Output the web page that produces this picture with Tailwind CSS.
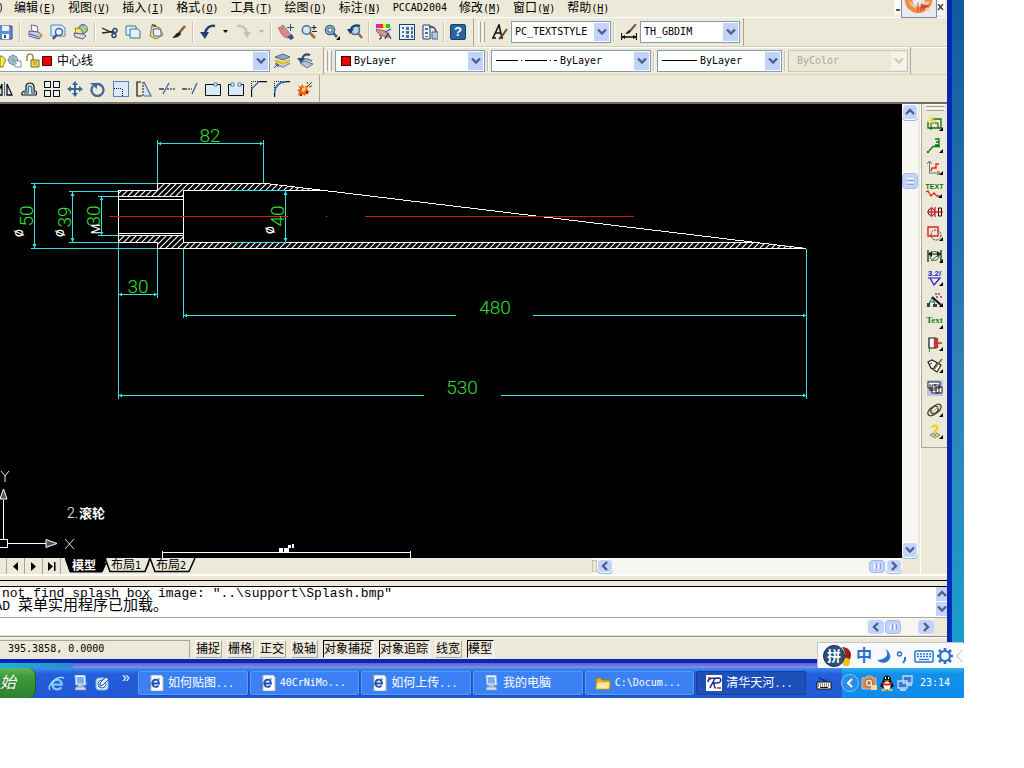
<!DOCTYPE html>
<html lang="zh-CN">
<head>
    <meta charset="UTF-8">
    <meta name="viewport" content="width=device-width, initial-scale=1.0">
    <title>PCCAD2004</title>
    <script src="https://cdn.jsdelivr.net/npm/@tailwindcss/browser@4"></script>
</head>
<body class="flex min-h-screen flex-col bg-white pr-[60px] pb-[70px] font-['DejaVu_Sans_Mono','Noto_Sans_CJK_SC',monospace] text-[10px] leading-4 text-black">
    <!-- Shared glyphs -->
    <svg class="hidden">
        <symbol id="down" viewBox="0 0 10 8"><path d="M1 1.5l4 4 4-4" fill="none" stroke="#4d6185" stroke-width="2.4"/></symbol>
        <symbol id="up" viewBox="0 0 10 8"><path d="M1 6l4-4 4 4" fill="none" stroke="#4d6185" stroke-width="2.4"/></symbol>
        <symbol id="left" viewBox="0 0 8 10"><path d="M6 1L2 5l4 4" fill="none" stroke="#4d6185" stroke-width="2.4"/></symbol>
        <symbol id="right" viewBox="0 0 8 10"><path d="M2 1l4 4-4 4" fill="none" stroke="#4d6185" stroke-width="2.4"/></symbol>
        <symbol id="ie-page" viewBox="0 0 16 16">
            <path d="M3 0h10l2 2v14H3z" fill="#fff" stroke="#b8b8a8"/>
            <path d="M11 8.500H4.500a3.200 3.200 0 1 1 6.300-1.200zM10.500 10.500a3.300 3.300 0 0 1-6-2" fill="none" stroke="#1c4fae" stroke-width="1.800"/>
            <path d="M1.500 13C-.5 10 8 3 12 4" fill="none" stroke="#2a66c8"/>
        </symbol>
        <symbol id="computer" viewBox="0 0 16 16">
            <path d="M3 0h10l1 10H4z" fill="#eef6ff" stroke="#9db8e8"/>
            <path d="M4.500 2h7l.7 6.500H5.200z" fill="#6cb0f8"/>
            <path d="M6 10h5v2H6zM4 12h9l1 3H3z" fill="#d7dbe6" stroke="#8f9bb8" stroke-width=".6"/>
        </symbol>
    </svg>

    <div class="relative flex flex-1 flex-col bg-linear-to-b from-[#0f5a9e] via-[#2f7fb4] to-[#08a4d0]">
        <!-- Application window -->
        <div class="mr-3 flex flex-1 flex-col border-r-[5px] border-b-4 border-[#0628b4] bg-[#ece9d8]">
            <!-- Menu bar -->
            <header class="flex h-[18px] items-start border-b border-white pl-[2px]">
                <nav class="flex flex-1 gap-3 text-xs leading-4 whitespace-nowrap">
                    <span class="-ml-1 w-1 overflow-hidden text-[10px]">)</span>
                    <a href="#">编辑<span class="text-[10px]">(<u>E</u>)</span></a>
                    <a href="#">视图<span class="text-[10px]">(<u>V</u>)</span></a>
                    <a href="#">插入<span class="text-[10px]">(<u>I</u>)</span></a>
                    <a href="#">格式<span class="text-[10px]">(<u>O</u>)</span></a>
                    <a href="#">工具<span class="text-[10px]">(<u>T</u>)</span></a>
                    <a href="#">绘图<span class="text-[10px]">(<u>D</u>)</span></a>
                    <a href="#">标注<span class="text-[10px]">(<u>N</u>)</span></a>
                    <a href="#" class="text-[10px]">PCCAD2004</a>
                    <a href="#">修改<span class="text-[10px]">(<u>M</u>)</span></a>
                    <a href="#">窗口<span class="text-[10px]">(<u>W</u>)</span></a>
                    <a href="#">帮助<span class="text-[10px]">(<u>H</u>)</span></a>
                </nav>
                <div class="mr-[2px] flex h-[15px] w-[51px] items-start justify-end bg-[#fbfaf5]">
                    <span class="mt-[9px] mr-px h-[2px] w-[4px] bg-[#555]"></span>
                    <svg class="h-[18px] w-[36px] border border-t-0 border-[#7a8ea8] bg-[#e9e9ee]" viewBox="0 0 36 18">
                        <path d="M3 0c0 7 5 13 14 14 9-1 15-7 15-14h-8c0 5-3 7-7 7s-6-3-6-7z" fill="#ee8a4a"/>
                        <path d="M7 0c1 5 5 9 9 9M20 3l10-2-4 6 3 4-8-2z" fill="#f8c8a0"/>
                        <path d="M20 5l8 1-6 4zM17 3v9M20 7v5" fill="#e2441e" stroke="#c8431c"/>
                    </svg>
                    <svg class="mt-1 size-[8px]" viewBox="0 0 8 8"><path d="M1 0l5 6M6 0L1 6" stroke="#444" stroke-width="1.500"/></svg>
                </div>
            </header>

            <!-- Standard + styles toolbars -->
            <div class="flex h-[29px] items-center border-b border-[#d8d2bd] shadow-[0_1px_0_#fff]">
                <div class="flex h-full items-center border-r border-[#aca899]">
                    <button class="flex w-[17px] justify-end pr-[4px]" aria-label="保存"><svg class="size-4 shrink-0" viewBox="0 0 16 16"><path d="M2 2h13v13H2z" fill="#5f8fce" stroke="#274f86"/><path d="M5 2h7v5H5z" fill="#e9f1fb"/><path d="M5 10h7v5H5z" fill="#fff"/><path d="M7 11h2v3H7z" fill="#274f86"/></svg></button>
                    <span class="mx-[2px] h-5 w-[2px] border-r border-white bg-[#c5c2b2]"></span>
                    <button class="flex w-[23px] justify-center" aria-label="打印"><svg class="size-4" viewBox="0 0 16 16"><path d="M4 1l6 1 1 6-6-1z" fill="#fff" stroke="#5b6a9a"/><path d="M2 7l9 1 4 3-3 4-10-3z" fill="#c9cfe8" stroke="#55608f"/><path d="M3 10l9 3" stroke="#4a5a98"/><path d="M12 9l2 2" stroke="#d8a030" stroke-width="2"/></svg></button>
                    <button class="flex w-[23px] justify-center" aria-label="打印预览"><svg class="size-4" viewBox="0 0 16 16"><path d="M1 1h11l3 3v8H1z" fill="#d7ebfb" stroke="#5589c4"/><circle cx="9" cy="8" r="3.500" fill="#eef8ff" stroke="#3f669c" stroke-width="1.400"/><path d="M6.500 11L3 15" stroke="#3a4f80" stroke-width="2.400"/></svg></button>
                    <button class="flex w-[23px] justify-center" aria-label="发布"><svg class="size-4" viewBox="0 0 16 16"><circle cx="10" cy="5" r="4.500" fill="#80bdd8" stroke="#3a6f90"/><path d="M2 4l6 1 2 5-7-1z" fill="#ffe860" stroke="#9a8b20"/><path d="M1 9l9 1 3 2-3 3-8-2z" fill="#d4d8ea" stroke="#55608f"/><path d="M9 3l3 4M12 2l2 3" stroke="#e8d040" stroke-width="1.500"/></svg></button>
                    <span class="mx-[2px] h-5 w-[2px] border-r border-white bg-[#c5c2b2]"></span>
                    <button class="flex w-[23px] justify-center" aria-label="剪切"><svg class="size-4" viewBox="0 0 16 16"><path d="M0 4l11 5M0 9l11-1.500" stroke="#23262e" stroke-width="1.300"/><circle cx="13" cy="6.500" r="2" fill="none" stroke="#2c4272" stroke-width="1.400"/><circle cx="12" cy="11.500" r="2" fill="none" stroke="#2c4272" stroke-width="1.400"/></svg></button>
                    <button class="flex w-[23px] justify-center" aria-label="复制"><svg class="size-4" viewBox="0 0 16 16"><path d="M1 2h10v9H1z" fill="#e2f2fc" stroke="#3d71a4"/><path d="M5 5h8l2 2v7H5z" fill="#e2f2fc" stroke="#3d71a4"/></svg></button>
                    <button class="flex w-[23px] justify-center" aria-label="粘贴"><svg class="size-4" viewBox="0 0 16 16"><path d="M4 1l8 3 3 7-7 4-6-3z" fill="#e5d68c" stroke="#938438"/><path d="M5 5h6l2 2v5H6z" fill="#e9f4fd" stroke="#44719f"/><path d="M4 1l4 1" stroke="#555" stroke-width="2"/></svg></button>
                    <button class="flex w-[23px] justify-center" aria-label="特性匹配"><svg class="size-4" viewBox="0 0 16 16"><path d="M14 2L8 9" stroke="#8b5a3b" stroke-width="2.500"/><path d="M9 8l1 2c-2 3-5 4-9 4 3-2 3-5 8-6z" fill="#2b1f1c"/></svg></button>
                    <span class="mx-[2px] h-5 w-[2px] border-r border-white bg-[#c5c2b2]"></span>
                    <button class="flex w-[23px] justify-center" aria-label="放弃"><svg class="size-4" viewBox="0 0 16 16"><path d="M15 2C10 1 6 4 5 9" fill="none" stroke="#23416f" stroke-width="2.600"/><path d="M0 8h9l-4 7z" fill="#23416f"/></svg></button>
                    <button class="flex w-[13px] justify-center" aria-label="放弃列表"><svg class="h-1 w-[7px]" viewBox="0 0 7 4"><path d="M1 0h5L3.500 3z"/></svg></button>
                    <button class="flex w-[23px] justify-center" aria-label="重做" disabled><svg class="size-4" viewBox="0 0 16 16"><path d="M1 2c5-1 9 2 10 7" fill="none" stroke="#c3c2bb" stroke-width="2.400"/><path d="M7 8h8l-4 6z" fill="#c3c2bb"/></svg></button>
                    <button class="flex w-[13px] justify-center" aria-label="重做列表" disabled><svg class="h-1 w-[7px]" viewBox="0 0 7 4"><path d="M1 0h5L3.500 3z" fill="#b5b3a8"/></svg></button>
                    <span class="mx-[2px] h-5 w-[2px] border-r border-white bg-[#c5c2b2]"></span>
                    <button class="flex w-[23px] justify-center" aria-label="实时平移"><svg class="size-4" viewBox="0 0 16 16"><path d="M0 4l2-1 3 3-2-4 2-1 5 6 3 4-4 3C4 13 3 8 0 4z" fill="#d18d8c" stroke="#9c5a5c" stroke-width=".7"/><path d="M9 13l5-3 2 4-3 2z" fill="#2b5690"/><path d="M12.500 0v7M9 3.500h7" stroke="#38527c"/></svg></button>
                    <button class="flex w-[23px] justify-center" aria-label="实时缩放"><svg class="size-4" viewBox="0 0 16 16"><circle cx="5.500" cy="6" r="4.200" fill="#cdeaf6" stroke="#536d8c" stroke-width="1.500"/><path d="M9 9l5 5" stroke="#a06a45" stroke-width="2.600"/><path d="M13 1v5M10.500 3.500h5M11 7.500h5" stroke="#222"/></svg></button>
                    <button class="flex w-[23px] justify-center" aria-label="窗口缩放"><svg class="size-4" viewBox="0 0 16 16"><circle cx="6" cy="6" r="4.500" fill="#bfe0f2" stroke="#3f5d85" stroke-width="1.500"/><path d="M4 4h4v4H4z" fill="#fff" stroke="#2d4a78"/><path d="M9 9l4 4" stroke="#4b6287" stroke-width="2.600"/><path d="M16 12v4h-4z"/></svg></button>
                    <button class="flex w-[23px] justify-center" aria-label="上一个缩放"><svg class="size-4" viewBox="0 0 16 16"><circle cx="8" cy="6" r="4.500" fill="#b5d5ea" stroke="#4a678e" stroke-width="1.500"/><path d="M11 9l4 5" stroke="#8c6a5a" stroke-width="2.600"/><path d="M13 2C8 0 5 3 4 6" fill="none" stroke="#1f3d70" stroke-width="2"/><path d="M0 5h7l-4 5z" fill="#1f3d70"/></svg></button>
                    <span class="mx-[2px] h-5 w-[2px] border-r border-white bg-[#c5c2b2]"></span>
                    <button class="flex w-[23px] justify-center" aria-label="特性"><svg class="size-4" viewBox="0 0 16 16"><path d="M0 0h4v4H0z" fill="#e020c0"/><path d="M4 0h3v4H4z" fill="#f03020"/><path d="M7 0h3v4H7z" fill="#ffe020"/><path d="M10 0h4v4h-4z" fill="#20c040"/><path d="M0 5l9 2 4 4-4 2-8-5z" fill="#d49a92" stroke="#7b504f" stroke-width=".8"/><path d="M3 11c3 0 3 4 0 4M9 15l3-6 3 6M10 13h4M15 5l-6 3" stroke="#324777" fill="none" stroke-width="1.200"/></svg></button>
                    <button class="flex w-[23px] justify-center" aria-label="设计中心"><svg class="size-4" viewBox="0 0 16 16" shape-rendering="crispEdges"><path d="M.5.5h15v15H.5z" fill="#e4f3fb" stroke="#22406c"/><path d="M3 3h2v2H3zM3 7h2v2H3zM3 11h2v2H3zM7 3h3v3H7zM12 3h2v3h-2zM7 7h3v3H7zM12 7h2v3h-2zM7 11h3v3H7zM12 11h2v3h-2z" fill="#4a7099"/></svg></button>
                    <button class="flex w-[23px] justify-center" aria-label="工具选项板"><svg class="size-4" viewBox="0 0 16 16"><path d="M1 1h7v14H1z" fill="#e4f3fb" stroke="#22406c"/><path d="M3 4h3v2H3zM3 8h3v2H3zM3 12h3v1H3z" fill="#4a7099"/><path d="M7 3c4-1 7 1 7 6" fill="none" stroke="#22406c" stroke-width="1.500"/><path d="M10 8h6v7h-6z" fill="#b5cce0" stroke="#4a6287"/></svg></button>
                    <span class="mx-[2px] h-5 w-[2px] border-r border-white bg-[#c5c2b2]"></span>
                    <button class="mx-[3px] flex size-[16px] items-center justify-center rounded-xs border border-[#163d6b] bg-[#2a649f] font-['Liberation_Sans'] text-[13px] font-bold text-white">?</button>
                    <span class="w-[4px]"></span>
                </div>
                <div class="flex h-full items-center border-r border-[#aca899] pr-[3px]">
                    <span class="ml-[4px] h-[22px] w-[3px] border border-white border-r-[#aca899]"></span>
                    <span class="mr-[3px] ml-px h-[22px] w-[3px] border border-white border-r-[#aca899]"></span>
                    <button class="flex w-[23px] justify-center" aria-label="文字样式"><svg class="size-4" viewBox="0 0 16 16"><path d="M1 14L7 1l3 13M3 9h6M0 14h4M8 14h3" fill="none" stroke="#111" stroke-width="1.600"/><path d="M15 5l-5 7-3 3" stroke="#6b4a3a" stroke-width="2"/></svg></button>
                    <label class="relative flex h-[22px] w-[100px] items-center border border-[#7f9db9] bg-white">
                        <select class="h-full w-full appearance-none pl-[3px] outline-none" aria-label="文字样式"><option>PC_TEXTSTYLE</option></select>
                        <span class="pointer-events-none absolute right-px flex h-[18px] w-[15px] items-center justify-center bg-[#c1d2fb]"><svg class="h-2 w-[10px]"><use href="#down"/></svg></span>
                    </label>
                    <span class="mx-[2px] h-5 w-[2px] border-r border-white bg-[#c5c2b2]"></span>
                    <button class="flex w-[23px] justify-center" aria-label="标注样式"><svg class="size-4" viewBox="0 0 16 16"><path d="M.5 9v7M15.500 9v7M1 13h14" stroke="#111" stroke-width="1.300"/><path d="M1 13l3-2v4zM15 13l-3-2v4z"/><path d="M15 0L9 7" stroke="#865239" stroke-width="2"/><path d="M10 6c0 3-3 4-6 4 2-1 2-4 6-4z" fill="#222"/></svg></button>
                    <label class="relative flex h-[22px] w-[100px] items-center border border-[#7f9db9] bg-white">
                        <select class="h-full w-full appearance-none pl-[3px] outline-none" aria-label="标注样式"><option>TH_GBDIM</option></select>
                        <span class="pointer-events-none absolute right-px flex h-[18px] w-[15px] items-center justify-center bg-[#c1d2fb]"><svg class="h-2 w-[10px]"><use href="#down"/></svg></span>
                    </label>
                </div>
            </div>

            <!-- Layer + properties toolbars -->
            <div class="flex h-[28px] items-center border-b border-[#d8d2bd]">
                <label class="relative flex h-[22px] w-[270px] items-center border border-l-0 border-[#7f9db9] bg-white">
                    <svg class="h-4 w-[54px] shrink-0" viewBox="0 0 54 16">
                        <path d="M0 3c4 0 6 3 5 6-1 2-2 3-2 5H0z" fill="#ffe94a" stroke="#86792a"/>
                        <circle cx="13" cy="7" r="4.500" fill="#b9cfd6" stroke="#6b8ba0"/><path d="M15 8h6v6h-6z" fill="#fff" stroke="#7894b8"/><path d="M13 1v12M7 7h12M9 3l8 8M17 3l-8 8" stroke="#7894a8" stroke-width=".7"/>
                        <path d="M27 8V4a3 3 0 0 1 6 0v3" fill="none" stroke="#a49a38" stroke-width="1.600"/><path d="M31 7h8v7h-8z" fill="#f4dc50" stroke="#776b22"/><path d="M33 9h4M33 11h4" stroke="#a08f30"/>
                        <path d="M42.500 3.500h9v9h-9z" fill="#f00000" stroke="#400"/>
                    </svg>
                    <select class="h-full w-full appearance-none pl-[3px] text-xs outline-none" aria-label="图层"><option>中心线</option></select>
                    <span class="pointer-events-none absolute right-px flex h-[18px] w-[15px] items-center justify-center bg-[#c1d2fb]"><svg class="h-2 w-[10px]"><use href="#down"/></svg></span>
                </label>
                <button class="flex w-[23px] justify-center" aria-label="图层特性"><svg class="size-4" viewBox="0 0 16 16"><path d="M1 4l8-3 7 3-7 3z" fill="#8da5c8" stroke="#52698c"/><path d="M1 7l8 3 7-3M1 8l8 3 7-3" fill="none" stroke="#d8c430" stroke-width="2"/><path d="M4 12l5 2 7-4" fill="none" stroke="#8da5c8" stroke-width="2"/><path d="M0 15l4-4M1 11h3v3" fill="none" stroke="#1c3c7c"/></svg></button>
                <button class="flex w-[23px] justify-center" aria-label="上一个图层"><svg class="size-4" viewBox="0 0 16 16"><path d="M3 10l5-2 8 3-6 4z" fill="#b6c4da" stroke="#5a6d8e"/><path d="M4 7l6-1 5 2" fill="none" stroke="#7b90b4" stroke-width="2"/><path d="M13 2c-5-2-7 1-8 4" fill="none" stroke="#284a7e" stroke-width="2.200"/><path d="M0 5h8l-4 5z" fill="#284a7e"/></svg></button>
                <div class="ml-[7px] flex h-full items-center border-r border-l border-r-[#aca899] border-l-[#aca899] pr-[2px]">
                    <span class="ml-px h-[22px] w-[3px] border border-white border-r-[#aca899]"></span>
                    <span class="mr-[3px] ml-px h-[22px] w-[3px] border border-white border-r-[#aca899]"></span>
                    <label class="relative flex h-[22px] w-[150px] items-center border border-[#7f9db9] bg-white">
                        <span class="ml-[5px] size-[10px] shrink-0 border border-[#400] bg-[#f00000]"></span>
                        <select class="h-full w-full appearance-none pl-[3px] outline-none" aria-label="颜色"><option>ByLayer</option></select>
                        <span class="pointer-events-none absolute right-px flex h-[18px] w-[15px] items-center justify-center bg-[#c1d2fb]"><svg class="h-2 w-[10px]"><use href="#down"/></svg></span>
                    </label>
                    <span class="mx-[2px] h-5 w-[2px] border-r border-white bg-[#c5c2b2]"></span>
                    <label class="relative flex h-[22px] w-[160px] items-center border border-[#7f9db9] bg-white">
                        <svg class="ml-[4px] h-px w-[61px] shrink-0" viewBox="0 0 61 1"><path d="M0 .5h22m3 0h1m3 0h22m3 0h1m3 0h3" stroke="#000"/></svg>
                        <select class="h-full w-full appearance-none pl-[3px] outline-none" aria-label="线型"><option>ByLayer</option></select>
                        <span class="pointer-events-none absolute right-px flex h-[18px] w-[15px] items-center justify-center bg-[#c1d2fb]"><svg class="h-2 w-[10px]"><use href="#down"/></svg></span>
                    </label>
                    <span class="mx-[2px] h-5 w-[2px] border-r border-white bg-[#c5c2b2]"></span>
                    <label class="relative flex h-[22px] w-[125px] items-center border border-[#7f9db9] bg-white">
                        <span class="ml-[4px] h-px w-[35px] shrink-0 bg-black"></span>
                        <select class="h-full w-full appearance-none pl-[3px] outline-none" aria-label="线宽"><option>ByLayer</option></select>
                        <span class="pointer-events-none absolute right-px flex h-[18px] w-[15px] items-center justify-center bg-[#c1d2fb]"><svg class="h-2 w-[10px]"><use href="#down"/></svg></span>
                    </label>
                    <span class="mx-[2px] h-5 w-[2px] border-r border-white bg-[#c5c2b2]"></span>
                    <label class="relative flex h-[22px] w-[120px] items-center border border-[#c9c7ba]">
                        <select class="h-full w-full appearance-none pl-[8px] text-[#aca899] opacity-100 outline-none" aria-label="打印样式" disabled><option>ByColor</option></select>
                        <span class="pointer-events-none absolute right-px flex h-[18px] w-[15px] items-center justify-center bg-[#f5f4ea]"><svg class="h-2 w-[10px]" viewBox="0 0 10 8"><path d="M1 1.500l4 4 4-4" fill="none" stroke="#c9c7ba" stroke-width="2"/></svg></span>
                    </label>
                </div>
            </div>

            <!-- Modify toolbar -->
            <div class="flex h-[29px] items-center border-b-2 border-[#716f64]">
                <div class="flex h-full items-center border-r border-[#aca899] pr-[3px]">
                    <button class="flex w-[17px] justify-end pr-[4px]" aria-label="镜像"><svg class="size-4 shrink-0" viewBox="0 0 16 16"><path d="M7.500 1v14" stroke="#3b6ea5"/><path d="M5 3v11H0zM10 3v11h5z" fill="#dce9f8" stroke="#111" stroke-width="1.300"/></svg></button>
                    <button class="flex w-[23px] justify-center" aria-label="偏移"><svg class="size-4" viewBox="0 0 16 16"><path d="M1 14c-1-4 3-4 4-4 0-3-1-8 4-8s4 5 4 8c3 0 3 2 2 4z" fill="none" stroke="#111" stroke-width="1.200"/><path d="M3 12h4c1-3-1-7 2-7s1 4 2 7h3" fill="none" stroke="#3b78c0" stroke-width="1.500"/></svg></button>
                    <button class="flex w-[23px] justify-center" aria-label="阵列"><svg class="size-4" viewBox="0 0 16 16" shape-rendering="crispEdges"><path d="M.5.5h6v6h-6zM9.500.5h6v6h-6zM.5 9.500h6v6h-6zM9.500 9.500h6v6h-6z" fill="#e4effa" stroke="#111"/></svg></button>
                    <button class="flex w-[23px] justify-center" aria-label="移动"><svg class="size-4" viewBox="0 0 16 16"><path d="M8 2v12M2 8h12" stroke="#3c6899" stroke-width="2"/><path d="M8 0l3 4H5zM8 16l3-4H5zM0 8l4-3v6zM16 8l-4-3v6z" fill="#3c6899"/></svg></button>
                    <button class="flex w-[23px] justify-center" aria-label="旋转"><svg class="size-4" viewBox="0 0 16 16"><path d="M7 3a6 6 0 1 1-4 2" fill="none" stroke="#3c6899" stroke-width="2.300"/><path d="M0 2h7v6z" fill="#3c6899"/></svg></button>
                    <button class="flex w-[23px] justify-center" aria-label="缩放"><svg class="size-4" viewBox="0 0 16 16" shape-rendering="crispEdges"><path d="M.5.5h15v15H.5z" fill="#dbeafa" stroke="#5682b4"/><path d="M1 7.500h8v8" fill="none" stroke="#111" stroke-dasharray="1 1"/></svg></button>
                    <button class="flex w-[23px] justify-center" aria-label="拉伸"><svg class="size-4" viewBox="0 0 16 16"><path d="M5 1H1v14h5" fill="none" stroke="#111" stroke-width="1.200"/><path d="M7 1v14" stroke="#111" stroke-dasharray="2 1"/><path d="M8 1l7 14H8" fill="#d3e4f6" stroke="#4a6c94" stroke-width="1.200"/></svg></button>
                    <button class="flex w-[23px] justify-center" aria-label="修剪"><svg class="size-4" viewBox="0 0 16 16"><path d="M0 8h5" stroke="#111" stroke-width="1.200"/><path d="M4 13l6-11" stroke="#3b6ea5" stroke-width="1.400"/><path d="M8 8h8" stroke="#111" stroke-dasharray="2 1"/></svg></button>
                    <button class="flex w-[23px] justify-center" aria-label="延伸"><svg class="size-4" viewBox="0 0 16 16"><path d="M0 8h5" stroke="#111" stroke-width="1.200"/><path d="M6 8h4" stroke="#111" stroke-dasharray="2 1"/><path d="M10 13l5-11" stroke="#3b6ea5" stroke-width="1.400"/></svg></button>
                    <button class="flex w-[23px] justify-center" aria-label="打断于点"><svg class="size-4" viewBox="0 0 16 16"><path d="M.5 3.500h15v11H.5z" fill="#dbeafa" stroke="#111"/><path d="M9 2h3v3H9z" fill="#fff" stroke="#4a78b4"/></svg></button>
                    <button class="flex w-[23px] justify-center" aria-label="打断"><svg class="size-4" viewBox="0 0 16 16"><path d="M4 3.500H.5v11h15v-11H12" fill="#dbeafa" stroke="#111"/><path d="M3 2h3v3H3zM10 2h3v3h-3z" fill="#fff" stroke="#4a78b4"/></svg></button>
                    <button class="flex w-[23px] justify-center" aria-label="倒角"><svg class="size-4" viewBox="0 0 16 16"><path d="M.5 16V8M8 .5h8" stroke="#111" stroke-width="1.300"/><path d="M.5 7V.5H8" fill="none" stroke="#111" stroke-dasharray="1 1"/><path d="M.5 8L8 .5" stroke="#3b6ea5" stroke-width="1.400"/></svg></button>
                    <button class="flex w-[23px] justify-center" aria-label="圆角"><svg class="size-4" viewBox="0 0 16 16"><path d="M.5 16v-5M11 .5h5" stroke="#111" stroke-width="1.300"/><path d="M.5 9V.5H9" fill="none" stroke="#111" stroke-dasharray="1 1"/><path d="M.5 12C1 5 5 1 12 .8" fill="none" stroke="#2f6ec0" stroke-width="1.800"/></svg></button>
                    <button class="flex w-[23px] justify-center" aria-label="分解"><svg class="size-4" viewBox="0 0 16 16"><path d="M1 4l3 2 1-3 2 3 4-2-1 4 3 3-4 1-1 3-3-2-4 2 1-4-2-2 3-1z" fill="#e8621c"/><path d="M5 7l4-1-1 4-3 1z" fill="#ffe040"/><path d="M10 6l5-5M12 6l3-1M11 3l-1-2" stroke="#5a4038"/><path d="M3 13h2v2H3zM9 10h2v3H9z" fill="#a01010"/></svg></button>
                </div>
            </div>

            <!-- Drawing area -->
            <main class="flex flex-1">
                <div class="flex flex-1 flex-col">
                    <div class="flex flex-1">
                        <div class="flex min-h-[200px] flex-1 flex-col bg-black">
                            <svg class="min-h-0 w-full flex-1" viewBox="0 104 902 454" preserveAspectRatio="xMinYMin meet">
                                <defs>
                                    <pattern id="hatch" width="6" height="6" patternUnits="userSpaceOnUse"><path d="M-1 7L7-1M-1 1L1-1M5 7l2-2" stroke="#fff" stroke-width="1.100"/></pattern>
                                </defs>
                                <!-- Section hatching -->
                                <path d="M118 190h39v-7h109l58 8H183v6h-65zM118 235h65v7h573l50 6H157v-6h-39z" fill="url(#hatch)"/>
                                <!-- Dimension lines -->
                                <g fill="none" stroke="#38e0e0" shape-rendering="crispEdges">
                                    <path d="M157.500 140v43M263.500 140v43M157 143.500h107"/>
                                    <path d="M31 183.500h126M31 248.500h126M34.500 183v66"/>
                                    <path d="M69 191.500h49M69 242.500h49M72.500 191v52"/>
                                    <path d="M98 196.500h20M98 235.500h20M101.500 196v40"/>
                                    <path d="M118.500 243v156M157.500 249v49M118 294.500h40"/>
                                    <path d="M183.500 249v69M806.500 249v150M183 315.500h273M533 315.500h274"/>
                                    <path d="M118 395.500h306M501 395.500h306"/>
                                </g>
                                <!-- Dimension arrowheads -->
                                <g fill="#38e0e0">
                                    <path d="M158 143.500l3-2v4zM263 143.500l-3-2v4zM34.500 184l-2 4h4zM34.500 248l-2-4h4zM72.500 192l-2 4h4zM72.500 242l-2-4h4zM101.500 197l-2 3h4zM101.500 235l-2-3h4zM285.500 191l-2 4h4zM285.500 242l-2-4h4z"/>
                                    <path d="M119 294.500l3-2v4zM157 294.500l-3-2v4zM184 315.500l3-2v4zM806 315.500l-3-2v4zM119 395.500l3-2v4zM806 395.500l-3-2v4z"/>
                                </g>
                                <!-- Part outline -->
                                <g fill="none" stroke="#fff" shape-rendering="crispEdges">
                                    <path d="M118.500 242.500v-52h39v-7h109M118 242.500h39v6h649M118 196.500h65M118 199.500h65M118 233.500h65M118 235.500h65M183.500 190v53M183 190.500h140M183 242.500h573"/>
                                    <path d="M266 183.500l540 65"/>
                                    <path d="M162.500 558v-7M410.500 558v-7M162 552.500h249"/>
                                </g>
                                <path d="M230 190.500h56M230 242.500h56M285.500 190v53" stroke="#38e0e0" shape-rendering="crispEdges"/>
                                <path d="M109 216.500h179M365 216.500h269" stroke="#d81818" shape-rendering="crispEdges"/>
                                <path d="M326 216.500h1" stroke="#777"/>
                                <g class="font-['Roboto'] text-[19px] font-light" fill="#30e030" text-anchor="middle">
                                    <text x="210" y="142">82</text>
                                    <text x="138" y="293">30</text>
                                    <text x="495" y="314">480</text>
                                    <text x="462" y="394">530</text>
                                    <text transform="translate(33 216) rotate(-90)">50</text>
                                    <text transform="translate(71 217) rotate(-90)">39</text>
                                    <text transform="translate(100 216) rotate(-90)">30</text>
                                    <text transform="translate(284 216) rotate(-90)">40</text>
                                </g>
                                <g class="font-['Roboto'] text-[14px] font-normal" fill="#fff" text-anchor="middle">
                                    <text transform="translate(23 233) rotate(-90)">ø</text>
                                    <text transform="translate(64 233) rotate(-90)">ø</text>
                                    <text transform="translate(274 230) rotate(-90)">ø</text>
                                    <text transform="translate(100 229) rotate(-90)" class="text-[12px]">M</text>
                                </g>
                                <text x="67" y="518" fill="#fff" class="font-['Roboto'] text-[14px] font-light">2.</text>
                                <text x="79" y="518" fill="#fff" class="font-['Noto_Sans_CJK_SC'] text-[13px] font-bold">滚轮</text>
                                <path d="M279 548h4v4h-4zM284 548h5v4h-5zM288 545h3v3h-3zM292 544h2v4h-2z" fill="#fff"/>
                                <!-- UCS icon -->
                                <g fill="none" stroke="#fff">
                                    <path d="M-2 539.500h9v8h-9M3.500 539v-39M8 543.500h39" shape-rendering="crispEdges"/>
                                    <path d="M3.500 489l3.500 10H0zM57 543.500l-11 4v-8z" fill="#555"/>
                                    <path d="M1 471l4 5 4-5M5 476v6M65 539l9 10M74 539l-9 10" stroke-width=".9"/>
                                </g>
                            </svg>
                        </div>
                        <!-- Vertical scroll bar -->
                        <div class="flex w-4 flex-col bg-[#f7f6f1]">
                            <button class="flex size-4 items-center justify-center rounded-sm border border-white bg-[#c3d3fd] shadow-[0_1px_0_#9db4de]" aria-label="向上滚动"><svg class="h-2 w-[10px]"><use href="#up"/></svg></button>
                            <div class="mt-[53px] flex h-4 flex-col items-center justify-center gap-px rounded-sm border border-[#a3b9ea] bg-[#c3d3fd]">
                                <span class="h-px w-[7px] bg-white"></span><span class="h-px w-[7px] bg-[#8aa5e0]"></span><span class="h-px w-[7px] bg-white"></span><span class="h-px w-[7px] bg-[#8aa5e0]"></span>
                            </div>
                            <button class="mt-auto flex size-4 items-center justify-center rounded-sm border border-white bg-[#c3d3fd] shadow-[0_1px_0_#9db4de]" aria-label="向下滚动"><svg class="h-2 w-[10px]"><use href="#down"/></svg></button>
                        </div>
                    </div>
                    <!-- Layout tabs -->
                    <div class="flex h-4 items-start pr-4">
                        <button class="h-4 w-[7px] border-r border-[#aca899]" aria-label="第一个布局"></button>
                        <button class="flex h-4 w-[18px] items-center justify-center border-r border-[#aca899]" aria-label="上一个布局"><svg class="size-[9px]" viewBox="0 0 9 9"><path d="M7 0v9L2 4.500z"/></svg></button>
                        <button class="flex h-4 w-[18px] items-center justify-center border-r border-[#aca899]" aria-label="下一个布局"><svg class="size-[9px]" viewBox="0 0 9 9"><path d="M2 0v9l5-4.500z"/></svg></button>
                        <button class="flex h-4 w-[18px] items-center justify-center border-r border-[#aca899]" aria-label="最后一个布局"><svg class="size-[9px]" viewBox="0 0 9 9"><path d="M1 0v9l5-4.500zM7 0h1.500v9H7z"/></svg></button>
                        <div class="relative ml-1 flex h-[15px] w-[132px] items-center text-xs leading-3">
                            <svg class="absolute h-[15px] w-[132px]" viewBox="0 0 132 15">
                                <path d="M0 0l5 14h32l4-14z" stroke="#000"/>
                                <path d="M40 0l5 13.500h35L85 0M85 0l5 13.500h34L130 0M37 13.500L41 5M80 13.500L84 4" fill="none" stroke="#000" stroke-width="1.500"/>
                            </svg>
                            <a href="#" class="relative ml-[7px] w-[39px] font-bold text-white">模型</a>
                            <a href="#" class="relative w-[45px]">布局<span class="text-[10px]">1</span></a>
                            <a href="#" class="relative">布局<span class="text-[10px]">2</span></a>
                        </div>
                        <div class="ml-auto flex h-4 w-[310px] items-center bg-[#f7f6f1]">
                            <span class="h-3 w-[5px] border border-[#c5c2b2] bg-[#ece9d8]"></span>
                            <button class="flex h-[14px] w-4 items-center justify-center rounded-sm border border-white bg-[#c3d3fd] shadow-[0_1px_0_#9db4de]" aria-label="向左滚动"><svg class="h-[10px] w-2"><use href="#left"/></svg></button>
                            <div class="mr-px ml-auto flex h-[13px] w-4 items-center justify-center gap-px rounded-sm border border-[#a3b9ea] bg-[#c3d3fd]">
                                <span class="h-[6px] w-px bg-white"></span><span class="h-[6px] w-px bg-[#8aa5e0]"></span><span class="h-[6px] w-px bg-white"></span><span class="h-[6px] w-px bg-[#8aa5e0]"></span>
                            </div>
                            <button class="flex h-[14px] w-4 items-center justify-center rounded-sm border border-white bg-[#c3d3fd] shadow-[0_1px_0_#9db4de]" aria-label="向右滚动"><svg class="h-[10px] w-2"><use href="#right"/></svg></button>
                        </div>
                    </div>
                </div>

                <!-- PCCAD toolbar -->
                <aside class="ml-[2px] w-[27px] border-l border-white">
                    <div class="flex flex-col items-center border-b border-l border-[#aca899] pb-[4px]">
                        <span class="h-[3px] w-5 border border-white border-b-[#aca899]"></span>
                        <span class="mt-px mb-[2px] h-[3px] w-5 border border-white border-b-[#aca899]"></span>
                        <button class="flex h-[22px] items-center" aria-label="图幅"><svg class="size-4" viewBox="0 0 16 16"><path d="M5 3h9v9H1V6" fill="none" stroke="#087808" stroke-width="1.300"/><path d="M4 14V7h7v5" fill="none" stroke="#333"/><path d="M5 0v9M0 4.500h9M2 1l6 7M8 1L2 8" stroke="#f0d838"/><path d="M16 11v4h-4z"/></svg></button>
                        <button class="flex h-[22px] items-center" aria-label="序号"><svg class="size-4" viewBox="0 0 16 16"><path d="M8 1h4v6H8M9 4h3M13 8.500H6L2 13" fill="none" stroke="#087808" stroke-width="1.300"/><path d="M0 13h2v2H0z" fill="#087808"/><path d="M16 11v4h-4z"/></svg></button>
                        <button class="flex h-[22px] items-center" aria-label="坐标"><svg class="size-4" viewBox="0 0 16 16"><path d="M2.500 1v12H13M0 4l2.500-3L5 4M10 11l3 2-3 2" fill="none" stroke="#68756c"/><path d="M4 11l1-3h4V4h3" fill="none" stroke="#e02020" stroke-width="1.400"/><path d="M16 11v4h-4z"/></svg></button>
                        <button class="flex h-[22px] flex-col items-center justify-center" aria-label="文字"><span class="font-['Liberation_Sans'] text-[7px] leading-[7px] font-bold text-[#087808]">TEXT</span><svg class="h-2 w-4" viewBox="0 0 16 8"><path d="M0 2l2-1 3 5 3-3 3 3h3" fill="none" stroke="#e02020" stroke-width="1.300"/><path d="M16 4v4h-4z"/></svg></button>
                        <button class="flex h-[22px] items-center" aria-label="孔"><svg class="size-4" viewBox="0 0 16 16"><circle cx="4.500" cy="8" r="3.500" fill="none" stroke="#333"/><path d="M11.500 4h3v8h-3z" fill="none" stroke="#111"/><path d="M0 8h16M4.500 3v10M8 3v10" fill="none" stroke="#e02020" stroke-width="1.300"/></svg></button>
                        <button class="flex h-[22px] items-center" aria-label="构造"><svg class="size-4" viewBox="0 0 16 16"><circle cx="9" cy="9" r="5" fill="none" stroke="#333" stroke-dasharray="2 1"/><path d="M1 1h10v9H1z" fill="none" stroke="#e02020" stroke-width="1.400"/><path d="M16 11v4h-4z"/></svg></button>
                        <button class="flex h-[22px] items-center" aria-label="尺寸标注"><svg class="size-4" viewBox="0 0 16 16"><path d="M1 2v12M14 2v12M2 6h11" stroke="#111" stroke-width="1.200"/><path d="M1 6l4-3v6zM14 6l-4-3v6z"/><circle cx="7.500" cy="8" r="4.500" fill="none" stroke="#177838"/><path d="M4 13l7-6" stroke="#177838"/><path d="M16 11v4h-4z"/></svg></button>
                        <button class="flex h-[22px] flex-col items-center justify-center" aria-label="粗糙度"><span class="font-['Liberation_Sans'] text-[8px] leading-[7px] font-bold text-[#1818d0]">3.2/</span><svg class="h-[9px] w-4" viewBox="0 0 16 9"><path d="M1 1h12L7 8 3 1" fill="none" stroke="#1818d0" stroke-width="1.200"/><path d="M16 5v4h-4z"/></svg></button>
                        <button class="flex h-[22px] items-center" aria-label="编辑工具"><svg class="size-4" viewBox="0 0 16 16"><path d="M5 5l9 8" stroke="#111" stroke-width="2.200"/><path d="M5 6L1 13M5 6l4 8M2 10h6" stroke="#167878" fill="none"/><path d="M0 11h3v4H0zM6 12h4v3H6z" fill="#284848"/><path d="M8 2h2M12 1v2M13 5h2M9 5h2" stroke="#a03060" stroke-width="1.500"/><path d="M16 11v4h-4z"/></svg></button>
                        <button class="flex h-[22px] flex-col items-end justify-center" aria-label="技术要求"><span class="font-['Liberation_Serif'] text-[9px] leading-[9px] font-bold text-[#108020]">Text</span><svg class="h-1 w-1" viewBox="0 0 4 4"><path d="M4 0v4H0z"/></svg></button>
                        <button class="flex h-[22px] items-center" aria-label="零件"><svg class="size-4" viewBox="0 0 16 16"><path d="M2 2h7v10H2z" fill="#fff" stroke="#111" stroke-width="1.200"/><path d="M7.500 2v10M10.500 2v10M7 7h8" stroke="#e02020" stroke-width="1.300"/><path d="M2.500 12v4" stroke="#10a030"/><path d="M16 11v4h-4z"/></svg></button>
                        <button class="flex h-[22px] items-center" aria-label="标签"><svg class="size-4" viewBox="0 0 16 16"><path d="M1 4l4-2 9 5-4 7-6-4z" fill="#fff" stroke="#222" stroke-width="1.200"/><path d="M15 1l-7 9-2 2" stroke="#8a7030" stroke-width="1.800"/><path d="M3 6l2-1M6 11l4-6" stroke="#222"/><path d="M16 11v4h-4z"/></svg></button>
                        <button class="flex h-[22px] items-center" aria-label="装配"><svg class="size-4 bg-[#b8c3e4]" viewBox="0 0 16 16"><path d="M1 2h12v6H1zM5 5h7v8H5zM9 7h6v6H9z" fill="#fff" stroke="#222"/><path d="M3 4v7M3 10h7M8 4v3" stroke="#222"/></svg></button>
                        <button class="flex h-[22px] items-center" aria-label="弹簧"><svg class="size-4" viewBox="0 0 16 16"><g fill="none" stroke="#49493a"><ellipse cx="6" cy="9" rx="6" ry="3.500" transform="rotate(-40 6 9)" stroke-width="1.500"/><ellipse cx="9" cy="7" rx="6" ry="3.500" transform="rotate(-40 9 7)" stroke-width="1.500"/><path d="M5 11l6-6" stroke="#b0b060"/></g><path d="M16 11v4h-4z"/></svg></button>
                        <button class="flex h-[22px] items-center" aria-label="帮助"><svg class="size-4" viewBox="0 0 16 16"><path d="M3 11l5 3 5-3-5-3z" fill="#c9cbbc" stroke="#8a8c7c"/><path d="M5 4c0-4 7-3 5 1L8 7v2" fill="none" stroke="#e8d820" stroke-width="2.400"/><path d="M7 10h2v2H7z" fill="#a0a010"/><path d="M16 11v4h-4z"/></svg></button>
                    </div>
                </aside>
            </main>

            <!-- Command window -->
            <section>
                <div class="h-[7px] border-t-2 border-b border-t-white border-b-black"></div>
                <div class="h-[6px] border-b border-black"></div>
                <div class="flex h-[31px] border-b border-[#aca899] bg-white">
                    <div class="flex-1 font-['Liberation_Mono','Noto_Sans_CJK_SC',monospace] text-[13px]">
                        <p class="pl-[2px] leading-[14px]">not find splash box image: "..\support\Splash.bmp"</p>
                        <p class="flex gap-2 leading-[12px]"><span class="flex w-[10px] justify-end overflow-hidden">AD</span><span class="text-[15px]">菜单实用程序已加载。</span></p>
                    </div>
                    <div class="flex w-[11px] flex-col gap-px overflow-hidden">
                        <button class="flex h-[14px] items-center justify-center bg-[#c3d3fd]" aria-label="历史向上"><svg class="h-2 w-[10px]"><use href="#up"/></svg></button>
                        <button class="flex h-[14px] items-center justify-center bg-[#c3d3fd]" aria-label="历史向下"><svg class="h-2 w-[10px]"><use href="#down"/></svg></button>
                    </div>
                </div>
                <div class="flex h-[17px] items-center bg-white">
                    <input type="text" class="h-full min-w-0 flex-1 px-1 outline-none" aria-label="命令">
                    <div class="flex h-full w-[69px] items-center bg-[#f7f6f1] pl-[3px]">
                        <button class="flex h-[14px] w-4 items-center justify-center rounded-sm bg-[#c3d3fd]" aria-label="命令向左"><svg class="h-[10px] w-2"><use href="#left"/></svg></button>
                        <div class="ml-px flex h-[14px] w-4 items-center justify-center gap-px rounded-sm border border-[#a3b9ea] bg-[#c3d3fd]">
                            <span class="h-[6px] w-px bg-white"></span><span class="h-[6px] w-px bg-[#8aa5e0]"></span><span class="h-[6px] w-px bg-white"></span><span class="h-[6px] w-px bg-[#8aa5e0]"></span>
                        </div>
                        <button class="ml-auto flex h-[14px] w-4 items-center justify-center rounded-sm bg-[#c3d3fd]" aria-label="命令向右"><svg class="h-[10px] w-2"><use href="#right"/></svg></button>
                    </div>
                    <span class="h-full w-[13px] bg-[#ece9d8]"></span>
                </div>
                <div class="h-[2px] border-b border-[#8d8b80]"></div>
            </section>

            <!-- Status bar -->
            <footer class="flex h-[22px] items-center border-t border-white text-xs">
                <output class="mr-[5px] flex h-[18px] w-[190px] items-center border-t border-r border-t-[#aca899] border-r-[#aca899] pl-2 text-[10px]">395.3858, 0.0000</output>
                <div class="flex gap-[5px] leading-4">
                    <button class="h-[18px] border border-white border-r-[#aca899] border-b-[#aca899] pr-px">捕捉</button>
                    <button class="h-[18px] border border-white border-r-[#aca899] border-b-[#aca899] pr-px">栅格</button>
                    <button class="h-[18px] border border-white border-r-[#aca899] border-b-[#aca899] pr-px">正交</button>
                    <button class="h-[18px] border border-white border-r-[#aca899] border-b-[#aca899] pr-px">极轴</button>
                    <button class="h-[18px] border border-black border-r-white border-b-white pr-px">对象捕捉</button>
                    <button class="h-[18px] border border-black border-r-white border-b-white pr-px">对象追踪</button>
                    <button class="h-[18px] border border-white border-r-[#aca899] border-b-[#aca899] pr-px">线宽</button>
                    <button class="h-[18px] border border-black border-r-white border-b-white pr-px">模型</button>
                </div>
            </footer>
        </div>

        <!-- Strip between the window and the task bar -->
        <div class="flex h-[5px]">
            <span class="w-[73px] bg-linear-to-r from-[#18b4d8] to-[#2a8cc8]"></span>
            <span class="flex-1 bg-linear-to-b from-[#5a5fd0] to-[#8f8ee0]"></span>
        </div>

        <!-- Task bar -->
        <div class="flex h-[30px] items-stretch bg-linear-to-b from-[#3f8cf3] via-[#245edc] via-20% to-[#2258d2] text-xs text-white">
            <button class="w-9 overflow-hidden rounded-r-lg border-r border-[#1c5c1c] bg-linear-to-b from-[#5cb85a] via-[#3c9a3a] via-30% to-[#2f8030] pr-5 text-left text-base italic text-shadow-sm">始</button>
            <div class="flex w-[100px] items-center gap-[7px] pl-3">
                <a href="#" aria-label="Internet Explorer"><svg class="size-[17px]" viewBox="0 0 16 16"><path d="M13 9H4a4.500 4.500 0 1 1 9 0zM12.500 11.500A4.700 4.700 0 0 1 4 9" fill="none" stroke="#7cc8fa" stroke-width="2.200"/><path d="M2 14C-2 10 9 0 15 3" fill="none" stroke="#b4dcf8" stroke-width="1.200"/></svg></a>
                <a href="#" aria-label="我的电脑"><svg class="size-4"><use href="#computer"/></svg></a>
                <a href="#" aria-label="显示桌面"><svg class="size-4" viewBox="0 0 16 16"><rect x="1" y="3" width="12" height="12" rx="3" fill="#d9ecff" stroke="#82b4f0"/><circle cx="7" cy="9" r="4" fill="#fff" stroke="#276cc8"/><path d="M5 8l6-6 3 2-6 6-3 1z" fill="#e4eaf6" stroke="#184c9c"/></svg></a>
                <button class="mb-3 ml-1 font-['Liberation_Sans'] text-sm">»</button>
            </div>
            <nav class="my-[3px] mr-[10px] ml-[2px] flex flex-1 gap-[2px]">
                <button class="flex flex-1 items-center gap-1 rounded-xs border border-[#5b9bfb] bg-[#3c81f3] pl-[9px] whitespace-nowrap shadow-[1px_1px_0_#1d4ec0]"><svg class="size-4 shrink-0"><use href="#ie-page"/></svg><span>如何贴图<span class="text-[10px]">...</span></span></button>
                <button class="flex flex-1 items-center gap-1 rounded-xs border border-[#5b9bfb] bg-[#3c81f3] pl-[9px] text-[10px] whitespace-nowrap shadow-[1px_1px_0_#1d4ec0]"><svg class="size-4 shrink-0"><use href="#ie-page"/></svg>40CrNiMo...</button>
                <button class="flex flex-1 items-center gap-1 rounded-xs border border-[#5b9bfb] bg-[#3c81f3] pl-[9px] whitespace-nowrap shadow-[1px_1px_0_#1d4ec0]"><svg class="size-4 shrink-0"><use href="#ie-page"/></svg><span>如何上传<span class="text-[10px]">...</span></span></button>
                <button class="flex flex-1 items-center gap-1 rounded-xs border border-[#5b9bfb] bg-[#3c81f3] pl-[9px] whitespace-nowrap shadow-[1px_1px_0_#1d4ec0]"><svg class="size-4 shrink-0"><use href="#computer"/></svg>我的电脑</button>
                <button class="flex flex-1 items-center gap-1 rounded-xs border border-[#5b9bfb] bg-[#3c81f3] pl-[9px] text-[10px] whitespace-nowrap shadow-[1px_1px_0_#1d4ec0]"><svg class="size-4 shrink-0" viewBox="0 0 16 16"><path d="M1 3h5l1 2h8v9H1z" fill="#e0b23a" stroke="#9c7418"/><path d="M2 7h13l-1 7H1z" fill="#ffe994" stroke="#c49c38" stroke-width=".7"/></svg>C:\Docum...</button>
                <button class="flex flex-1 items-center gap-1 rounded-xs border border-[#163f96] bg-[#1d4fb8] pl-[9px] whitespace-nowrap"><svg class="size-4 shrink-0 bg-white" viewBox="0 0 16 16"><path d="M2 7c0-4 4-4 11-4 3 1 2 5-2 5H6M9 3C8 6 6 8 4 13M8 8c0 3 1 5 2 5" fill="none" stroke="#1c2a90" stroke-width="1.500"/><path d="M11 13h4M2 3h3" stroke="#e02020" stroke-width="1.500"/></svg><span>清华天河<span class="text-[10px]">...</span></span></button>
            </nav>
            <div class="flex w-[26px] items-center"><svg class="h-4 w-[16px]" viewBox="0 0 16 16"><path d="M1 7h14v7H1z" fill="#fff" stroke="#111"/><path d="M2 9h12M2 11h12" stroke="#111" stroke-dasharray="1 1"/><path d="M4 12.500h8M3 3c2 0 2 2 4 2s3 0 4 2" fill="none" stroke="#111"/></svg></div>
            <!-- System tray -->
            <div class="flex w-[122px] items-center gap-[2px] bg-linear-to-b from-[#2fb4f4] via-[#1290e9] via-20% to-[#0f8bee]">
                <button class="-ml-px flex size-[18px] items-center justify-center rounded-full border border-[#7cc4fa] bg-[#2c8ce8]" aria-label="展开"><svg class="h-[10px] w-2" viewBox="0 0 8 10"><path d="M6 1L2 5l4 4" fill="none" stroke="#fff" stroke-width="2"/></svg></button>
                <svg class="size-4" viewBox="0 0 16 16"><path d="M1 3h4l1-2h5l1 2h3v11H1z" fill="#e88840" stroke="#b8bcc8"/><circle cx="8" cy="8" r="4" fill="#f4ede4" stroke="#8a6a50"/><circle cx="8" cy="8" r="2" fill="#c07838"/><path d="M10 10h6v5h-6z" fill="#f4dca0"/></svg>
                <svg class="size-4" viewBox="0 0 16 16"><path d="M4 5c0-6 8-6 8 0l3 6-3 2H4l-3-2z" fill="#111"/><ellipse cx="8" cy="10.500" rx="3.500" ry="4" fill="#fff"/><path d="M3 7c3 2 7 2 10 0v2c-3 2-7 2-10 0z" fill="#e02020"/><path d="M6 2h1v2H6zM9 2h1v2H9z" fill="#fff"/><path d="M5 5.500h6L8 7zM3 14h4v2H2zM9 14h4l1 2H9z" fill="#f8b820"/></svg>
                <svg class="size-4" viewBox="0 0 16 16"><path d="M6 1h9v7H6zM1 6h9v7H1z" fill="#3c78d8" stroke="#c4dcf8" stroke-width="1.300"/><path d="M3 15h6M10 10h5" stroke="#dce8f8" stroke-width="1.500"/></svg>
                <time class="ml-[5px] text-[10px]">23:14</time>
            </div>
        </div>

        <!-- Input method bar floating over the window corner -->
        <div class="absolute right-0 bottom-[30px] flex h-[25px] w-[146px] items-center bg-[#f8f9fc] pl-[5px] shadow-[-1px_-1px_0_#c4c4cc]">
            <div class="relative flex size-[22px] items-center justify-center rounded-full border border-[#142c44] bg-[#28527c] text-sm font-bold text-white">拼</div>
            <svg class="-ml-[3px] h-[22px] w-[10px]" viewBox="0 0 10 22"><path d="M0 2c6 0 9 4 9 8s-3 8-8 8c3-5 3-11-1-16z" fill="#96241c"/><circle cx="4" cy="17" r="4" fill="#ecc020"/></svg>
            <span class="ml-1 text-[16px] font-bold text-[#2a72cc]">中</span>
            <svg class="ml-[4px] h-[18px] w-[60px]" viewBox="0 0 60 18">
                <path d="M9 2c5 5 1 11-8 11 6 6 15 1 13-5-1-4-3-5-5-6z" fill="#2a72cc"/>
                <circle cx="23.500" cy="7" r="2" fill="none" stroke="#2a72cc" stroke-width="1.400"/><path d="M29 10v3l-2 3" fill="none" stroke="#2a72cc" stroke-width="2"/>
                <rect x="39" y="4" width="18" height="11" rx="1" fill="#fff" stroke="#2a72cc" stroke-width="1.500"/>
                <path d="M41 7h14M41 9.500h14" stroke="#2a72cc" stroke-width="1.400" stroke-dasharray="2 1"/><path d="M43 12.500h10" stroke="#2a72cc" stroke-width="1.300"/>
            </svg>
            <svg class="size-[18px]" viewBox="0 0 18 18"><circle cx="9" cy="9" r="5" fill="none" stroke="#2a72cc" stroke-width="2.200"/><path d="M9 1v3M9 14v3M1 9h3M14 9h3M3 3l3 3M12 12l3 3M15 3l-3 3M6 12l-3 3" stroke="#2a72cc" stroke-width="2.600"/></svg>
            <svg class="ml-px h-4 w-2" viewBox="0 0 8 16"><path d="M7 2L2 8l5 6" fill="none" stroke="#c0c4cc"/></svg>
        </div>
    </div>
</body>
</html>
